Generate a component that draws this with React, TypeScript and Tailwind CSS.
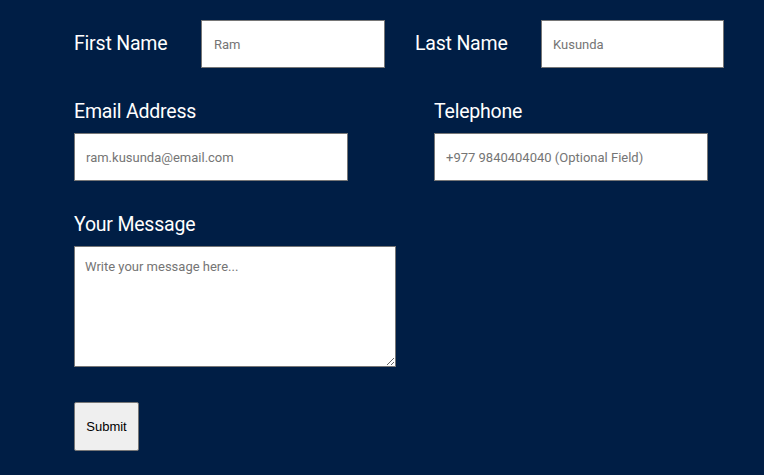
import React from "react";

const label = "text-white text-[19.5px] leading-[24px] tracking-[-0.2px]";
const inputCls =
  "h-[48px] bg-white border border-[#767676] text-[13px] text-[#222] placeholder:text-[#757575] outline-none";

export default function App() {
  return (
    <div
      className="min-h-[475px] w-[764px] bg-[#001e45] pl-[74px] pt-[20px]"
      style={{ fontFamily: "Roboto, 'Noto Sans', sans-serif" }}
    >
      <div className="flex items-center h-[48px]">
        <label className={`${label} w-[127px]`}>First Name</label>
        <input className={`${inputCls} w-[184px] px-[12px] text-[12px]`} placeholder="Ram" />
        <label className={`${label} ml-[30px] w-[126px]`}>Last Name</label>
        <input className={`${inputCls} w-[183px] px-[11px] text-[12px]`} placeholder="Kusunda" />
      </div>

      <div className="flex gap-[86px] mt-[32px]">
        <div className="flex flex-col">
          <label className={`${label} mb-[9px]`}>Email Address</label>
          <input className={`${inputCls} w-[274px] px-[11px]`} placeholder="ram.kusunda@email.com" />
        </div>
        <div className="flex flex-col">
          <label className={`${label} mb-[9px]`}>Telephone</label>
          <input
            className={`${inputCls} w-[274px] px-[11px]`}
            placeholder="+977 9840404040 (Optional Field)"
          />
        </div>
      </div>

      <div className="flex flex-col mt-[32px]">
        <label className={`${label} mb-[9px]`}>Your Message</label>
        <textarea
          className="w-[322px] h-[121px] bg-white border border-[#767676] text-[13px] px-[10px] py-[10px] text-[#222] placeholder:text-[#757575] outline-none block"
          placeholder="Write your message here..."
        />
      </div>

      <button
        className="mt-[35px] w-[65px] h-[49px] bg-[#efefef] border border-[#767676] rounded-[2px] text-[13px] text-black"
        style={{ fontFamily: "'Liberation Sans', Arial, sans-serif" }}
      >
        Submit
      </button>
    </div>
  );
}
